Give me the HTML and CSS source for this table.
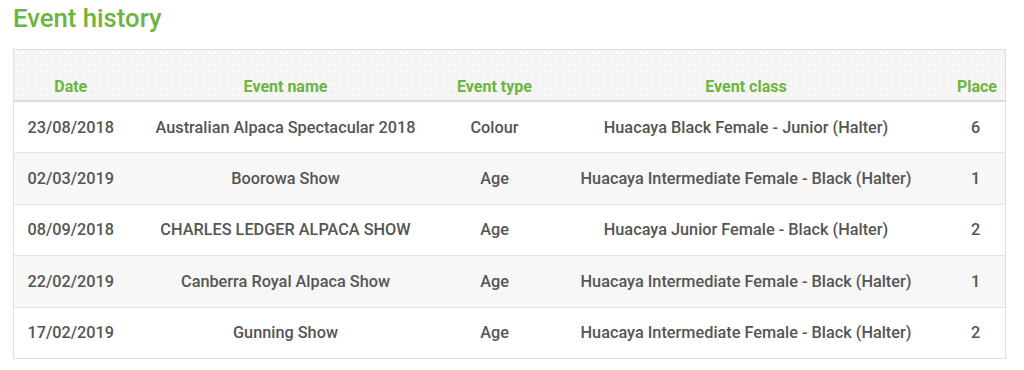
FILE: index.html
```html
<!DOCTYPE html>
<html>
<head>
<meta charset="utf-8">
<link rel="stylesheet" href="styles.css">
</head>
<body>
<h2 class="title">Event history</h2>
<table class="events">
  <colgroup>
    <col class="c-date"><col class="c-name"><col class="c-type"><col class="c-class"><col class="c-place">
  </colgroup>
  <thead>
    <tr><th>Date</th><th>Event name</th><th>Event type</th><th>Event class</th><th class="place">Place</th></tr>
  </thead>
  <tbody>
    <tr><td>23/08/2018</td><td>Australian Alpaca Spectacular 2018</td><td>Colour</td><td>Huacaya Black Female - Junior (Halter)</td><td>6</td></tr>
    <tr><td>02/03/2019</td><td>Boorowa Show</td><td>Age</td><td>Huacaya Intermediate Female - Black (Halter)</td><td>1</td></tr>
    <tr><td>08/09/2018</td><td>CHARLES LEDGER ALPACA SHOW</td><td>Age</td><td>Huacaya Junior Female - Black (Halter)</td><td>2</td></tr>
    <tr><td>22/02/2019</td><td>Canberra Royal Alpaca Show</td><td>Age</td><td>Huacaya Intermediate Female - Black (Halter)</td><td>1</td></tr>
    <tr><td>17/02/2019</td><td>Gunning Show</td><td>Age</td><td>Huacaya Intermediate Female - Black (Halter)</td><td>2</td></tr>
  </tbody>
</table>
</body>
</html>
```

FILE: styles.css
```css
html, body {
  margin: 0;
  padding: 0;
  background: #fff;
}
body {
  padding: 0 13px;
  font-family: Roboto, "Liberation Sans", sans-serif;
}
.title {
  margin: 0;
  padding-top: 3px;
  font-size: 25.7px;
  line-height: 30px;
  font-weight: 500;
  color: #6db440;
  height: 46px;
}
.events {
  width: 992px;
  border-collapse: collapse;
  table-layout: fixed;
  border: 1px solid #dedede;
}
.c-date { width: 114px; }
.c-name { width: 316px; }
.c-type { width: 102px; }
.c-class { width: 401px; }
.c-place { width: 59px; }
.events thead tr {
  background-color: #f4f4f4;
  background-image: radial-gradient(#fbfbfb 0.8px, transparent 1px);
  background-size: 6px 6px;
}
.events th {
  height: 47px;
  padding: 0 0 3px 0;
  vertical-align: bottom;
  font-size: 16px;
  font-weight: 700;
  color: #6db440;
  text-align: center;
  border-bottom: 2px solid #dcdcdc;
  line-height: 20px;
}
.events th.place {
  text-align: right;
  padding-right: 8px;
}
.events td {
  height: 50.4px;
  padding: 0;
  text-align: center;
  font-size: 16.3px;
  font-weight: 500;
  color: #555;
  border-top: 1px solid #e3e3e3;
}
.events tbody tr:nth-child(even) {
  background-color: #f7f7f7;
}
.events tbody tr:first-child td {
  border-top: none;
}
```
